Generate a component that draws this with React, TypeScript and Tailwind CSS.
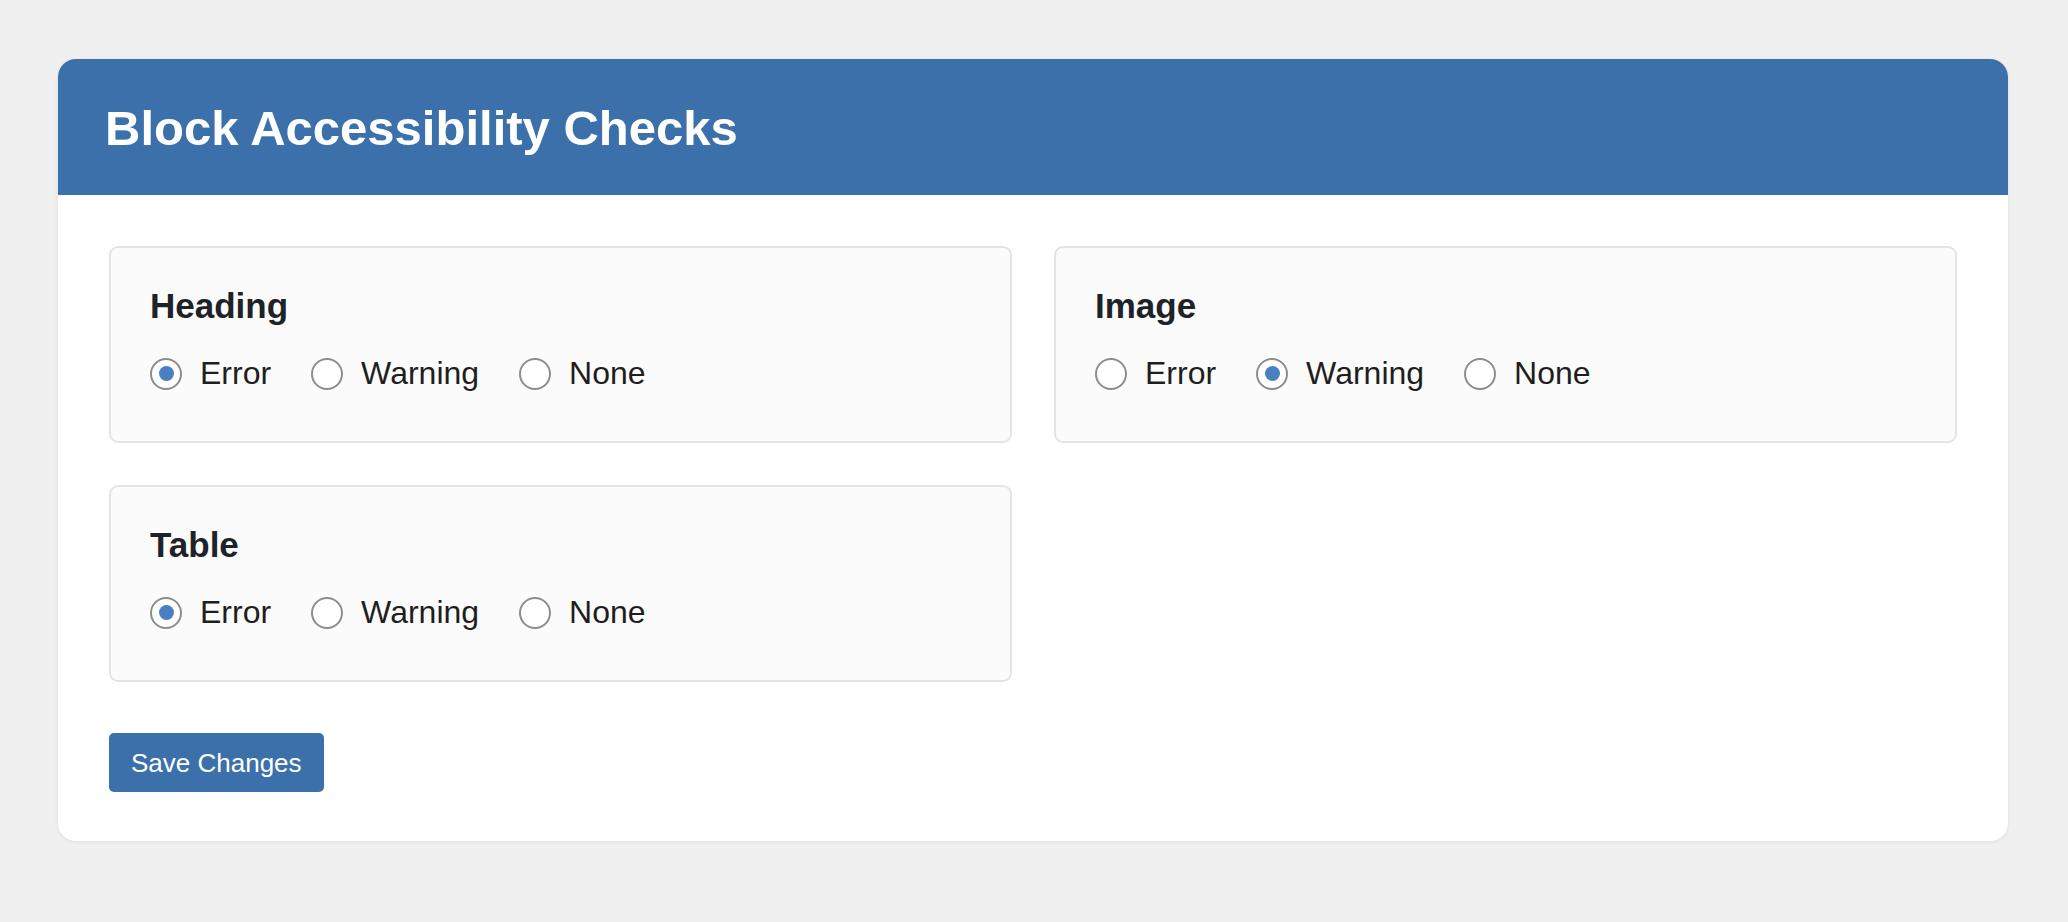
import { useState } from "react";

type Level = "error" | "warning" | "none";

const levels: { id: Level; label: string }[] = [
  { id: "error", label: "Error" },
  { id: "warning", label: "Warning" },
  { id: "none", label: "None" },
];

const initialChecks: { id: string; name: string; level: Level }[] = [
  { id: "heading", name: "Heading", level: "error" },
  { id: "image", name: "Image", level: "warning" },
  { id: "table", name: "Table", level: "error" },
];

function Radio({ checked }: { checked: boolean }) {
  return (
    <span className="flex-shrink-0 w-[32px] h-[32px] rounded-full border-2 border-[#8d8d8d] bg-white flex items-center justify-center">
      {checked && <span className="w-[15px] h-[15px] rounded-full bg-[#4a7fc1]" />}
    </span>
  );
}

export default function App() {
  const [checks, setChecks] = useState(initialChecks);

  const setLevel = (id: string, level: Level) => {
    setChecks((prev) => prev.map((c) => (c.id === id ? { ...c, level } : c)));
  };

  return (
    <div className="min-h-screen bg-[#f0f0f0] pt-[59px] pl-[58px] pr-[60px] pb-[60px] font-['Liberation_Sans',Arial,sans-serif] text-[#1d2327]">
      <div className="bg-white rounded-[18px] overflow-hidden shadow-[0_1px_4px_rgba(0,0,0,0.08)]">
        {/* Header */}
        <div className="h-[136px] bg-[#3c70ab] pt-[41px] pl-[47px]">
          <h1 className="text-[49px] leading-[57px] font-bold text-white">
            Block Accessibility Checks
          </h1>
        </div>

        {/* Body */}
        <div className="px-[51px] pt-[51px] pb-[49px]">
          <div className="grid grid-cols-2 gap-[42px]">
            {checks.map((check) => (
              <div
                key={check.id}
                className="bg-[#fbfbfb] border-2 border-[#e4e4e4] rounded-[9px] px-[39px] pt-[38px] pb-[49px]"
              >
                <h2 className="text-[35px] leading-[40px] font-bold">{check.name}</h2>
                <div className="mt-[29px] flex items-center gap-[40px]">
                  {levels.map((lvl) => (
                    <label
                      key={lvl.id}
                      onClick={() => setLevel(check.id, lvl.id)}
                      className="flex items-center gap-[18px] cursor-pointer"
                    >
                      <Radio checked={check.level === lvl.id} />
                      <span className="text-[32px] leading-[37px] text-[#1e1e1e]">{lvl.label}</span>
                    </label>
                  ))}
                </div>
              </div>
            ))}
          </div>

          <button className="mt-[51px] h-[59px] px-[22px] bg-[#3c70ab] text-white text-[26px] leading-[30px] rounded-[5px] flex items-center">
            Save Changes
          </button>
        </div>
      </div>
    </div>
  );
}
